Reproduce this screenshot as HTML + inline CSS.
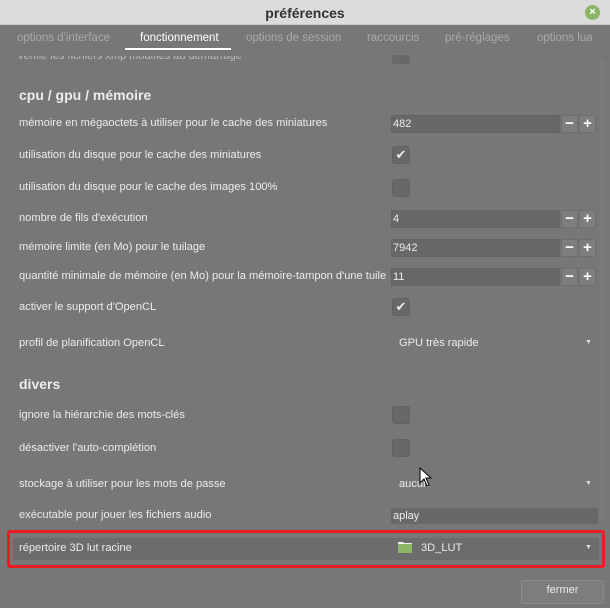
<!DOCTYPE html>
<html><head><meta charset="utf-8"><style>
*{margin:0;padding:0;box-sizing:border-box}
body{width:610px;height:608px;background:#777;font-family:"Liberation Sans","DejaVu Sans",sans-serif;color:#ececec;font-size:11px;position:relative;overflow:hidden}
.a{position:absolute;white-space:nowrap}
.title{left:0;top:0;width:610px;height:25px;background:#dcdcdc;color:#333;font-size:14px;font-weight:bold;text-align:center;line-height:26px;border-bottom:1px solid #c8c8c8}
.close{left:585px;top:5px;width:15px;height:15px;border-radius:50%;background:#8cb566;color:#fff;font-size:11px;line-height:15px;text-align:center;font-weight:bold}
.tab{top:32px;font-size:11.5px;color:#aaa}
.lab{left:19px;transform:translateY(-50%);font-size:11.1px}
.h{left:19px;font-size:14px;font-weight:bold;transform:translateY(-50%)}
.ent{left:391px;width:169px;height:18px;background:#686868;border:1px solid #646464;padding-left:1px;line-height:16px}
.btn{width:17px;height:18px;background:#7e7e7e;border:1px solid #6e6e6e;color:#fff;text-align:center;font-size:15px;line-height:16px;font-weight:bold}
.cb{left:392px;width:18px;height:18px;background:#686868;border:1px solid #626262;border-radius:3px;color:#eee;text-align:center;font-size:13px;line-height:16px}
.dd{left:585px;font-size:7px;color:#ddd}
</style></head><body>
<div class="a title">préférences</div>
<div class="a close">×</div>
<div class="a tab" style="left:17px">options d'interface</div>
<div class="a tab" style="left:140px;color:#fff">fonctionnement</div>
<div class="a" style="left:125px;top:48px;width:106px;height:2px;background:#fff"></div>
<div class="a tab" style="left:246px">options de session</div>
<div class="a tab" style="left:367px">raccourcis</div>
<div class="a tab" style="left:445px">pré-réglages</div>
<div class="a tab" style="left:537px">options lua</div>
<div class="a" style="left:600px;top:60px;width:4px;height:460px;background:#7b7b7b"></div>
<div class="a" style="left:18px;top:56px;color:#bbb;height:5px;overflow:hidden;line-height:0px;font-size:11px">vérifie les fichiers xmp modifiés au démarrage</div>
<div class="a" style="left:392px;top:55px;width:18px;height:9px;background:#686868;border-radius:0 0 3px 3px"></div>

<div class="a h" style="top:95px">cpu / gpu / mémoire</div>
<div class="a lab" style="top:123px">mémoire en mégaoctets à utiliser pour le cache des miniatures</div>
<div class="a ent" style="top:115px">482</div><div class="a btn" style="left:561px;top:115px">−</div><div class="a btn" style="left:579px;top:115px">+</div>
<div class="a lab" style="top:155px">utilisation du disque pour le cache des miniatures</div>
<div class="a cb" style="top:146px">✔</div>
<div class="a lab" style="top:187px">utilisation du disque pour le cache des images 100%</div>
<div class="a cb" style="top:179px"></div>
<div class="a lab" style="top:218px">nombre de fils d'exécution</div>
<div class="a ent" style="top:210px">4</div><div class="a btn" style="left:561px;top:210px">−</div><div class="a btn" style="left:579px;top:210px">+</div>
<div class="a lab" style="top:247px">mémoire limite (en Mo) pour le tuilage</div>
<div class="a ent" style="top:239px">7942</div><div class="a btn" style="left:561px;top:239px">−</div><div class="a btn" style="left:579px;top:239px">+</div>
<div class="a lab" style="top:276px">quantité minimale de mémoire (en Mo) pour la mémoire-tampon d'une tuile</div>
<div class="a ent" style="top:268px">11</div><div class="a btn" style="left:561px;top:268px">−</div><div class="a btn" style="left:579px;top:268px">+</div>
<div class="a lab" style="top:307px">activer le support d'OpenCL</div>
<div class="a cb" style="top:298px">✔</div>
<div class="a lab" style="top:343px">profil de planification OpenCL</div>
<div class="a lab" style="left:399px;top:343px">GPU très rapide</div>
<div class="a dd" style="top:339px">▼</div>

<div class="a h" style="top:384px">divers</div>
<div class="a lab" style="top:415px">ignore la hiérarchie des mots-clés</div>
<div class="a cb" style="top:406px"></div>
<div class="a lab" style="top:448px">désactiver l'auto-complétion</div>
<div class="a cb" style="top:439px"></div>
<div class="a lab" style="top:484px">stockage à utiliser pour les mots de passe</div>
<div class="a lab" style="left:399px;top:484px">aucun</div>
<div class="a dd" style="top:480px">▼</div>
<svg class="a" style="left:419px;top:467px" width="14" height="20"><path d="M1 1 L1 16 L5 12 L8 19 L10 18 L7 11 L12 11 Z" fill="#fff" stroke="#000" stroke-width="1"/></svg>
<div class="a lab" style="top:515px">exécutable pour jouer les fichiers audio</div>
<div class="a" style="left:391px;top:508px;width:207px;height:16px;background:#686868;padding-left:2px;line-height:16px">aplay</div>

<div class="a" style="left:7px;top:530px;width:598px;height:38px;border:3px solid #ed1c24;border-radius:3px"></div>
<div class="a" style="left:13px;top:538px;width:586px;height:22px;background:#6c6c6c"></div>
<div class="a lab" style="top:548px">répertoire 3D lut racine</div>
<svg class="a" style="left:397px;top:540px" width="16" height="14"><path d="M1 2 h5 l1 1 h8 v10 h-14z" fill="#8cb566"/><path d="M1 2 h5 l1 1 h8 v1 h-14z" fill="#eee"/></svg>
<div class="a lab" style="left:421px;top:548px">3D_LUT</div>
<div class="a dd" style="top:544px">▼</div>

<div class="a" style="left:521px;top:580px;width:83px;height:24px;background:#7d7d7d;border:1px solid #8a8a8a;border-radius:2px;text-align:center;line-height:18px">fermer</div>
</body></html>
